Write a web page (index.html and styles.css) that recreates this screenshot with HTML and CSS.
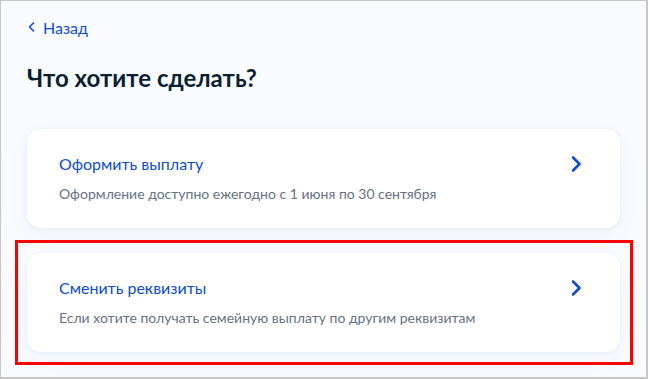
FILE: index.html
```html
<!DOCTYPE html>
<html lang="ru">
<head>
    <meta charset="UTF-8">
    <title>Что хотите сделать?</title>
    <link rel="stylesheet" href="styles.css">
</head>
<body>
    <div class="frame">
        <a class="back" href="#">
            <svg class="back_icon" width="10" height="12" viewBox="0 0 10 12"><path d="M6.5 2 2.5 6l4 4" fill="none" stroke="#0d4cd3" stroke-width="1.6" stroke-linecap="round" stroke-linejoin="round"/></svg>
            Назад
        </a>
        <h1 class="title">Что хотите сделать?</h1>
        <div class="list">
            <a class="card" href="#">
                <div class="card_text">
                    <div class="card_title">Оформить выплату</div>
                    <div class="card_desc">Оформление доступно ежегодно с 1 июня по 30 сентября</div>
                </div>
                <svg class="chevron" width="24" height="24" viewBox="0 0 24 24"><path d="M9 5.5 15.5 12 9 18.5" fill="none" stroke="#0d4cd3" stroke-width="2.6" stroke-linecap="round" stroke-linejoin="round"/></svg>
            </a>
            <div class="marked">
                <a class="card" href="#">
                    <div class="card_text">
                        <div class="card_title">Сменить реквизиты</div>
                        <div class="card_desc">Если хотите получать семейную выплату по другим реквизитам</div>
                    </div>
                    <svg class="chevron" width="24" height="24" viewBox="0 0 24 24"><path d="M9 5.5 15.5 12 9 18.5" fill="none" stroke="#0d4cd3" stroke-width="2.6" stroke-linecap="round" stroke-linejoin="round"/></svg>
                </a>
            </div>
        </div>
    </div>
</body>
</html>
```

FILE: styles.css
```css
* {
    box-sizing: border-box;
}
html, body {
    margin: 0;
    height: 100%;
}
body {
    font-family: Lato, "Noto Sans", sans-serif;
    color: #0b1f33;
}
.frame {
    height: 379px;
    background-color: #f9fbfe;
    border: 1px solid #c6c6c6;
    border-width: 1px 2px 2px 1px;
    padding: 14px 26px 0;
}
.back {
    display: flex;
    align-items: center;
    gap: 6px;
    height: 24px;
    font-size: 16px;
    color: #0d4cd3;
    text-decoration: none;
}
.title {
    margin: 23px 0 0;
    font-size: 24px;
    line-height: 32px;
    font-weight: bold;
}
.list {
    display: flex;
    flex-direction: column;
    gap: 25px;
    margin-top: 35px;
}
.card {
    display: flex;
    align-items: center;
    justify-content: space-between;
    height: 99px;
    padding: 0 32px;
    background-color: #fff;
    border-radius: 14px;
    box-shadow: 0 1px 4px #e3ebfc, 0 8px 24px rgba(230,235,245,.4);
    text-decoration: none;
}
.card_text {
    margin-top: -1px;
}
.card_title {
    font-size: 16px;
    line-height: 24px;
    color: #0d4cd3;
}
.card_desc {
    margin-top: 8px;
    font-size: 14px;
    line-height: 20px;
    color: #66727f;
}
.chevron {
    flex: none;
    margin-top: -30px;
}
.marked {
    position: relative;
}
.marked::after {
    content: "";
    position: absolute;
    top: -13px;
    left: -12px;
    right: -13px;
    bottom: -13px;
    border: 3px solid #f00;
    pointer-events: none;
}
```
